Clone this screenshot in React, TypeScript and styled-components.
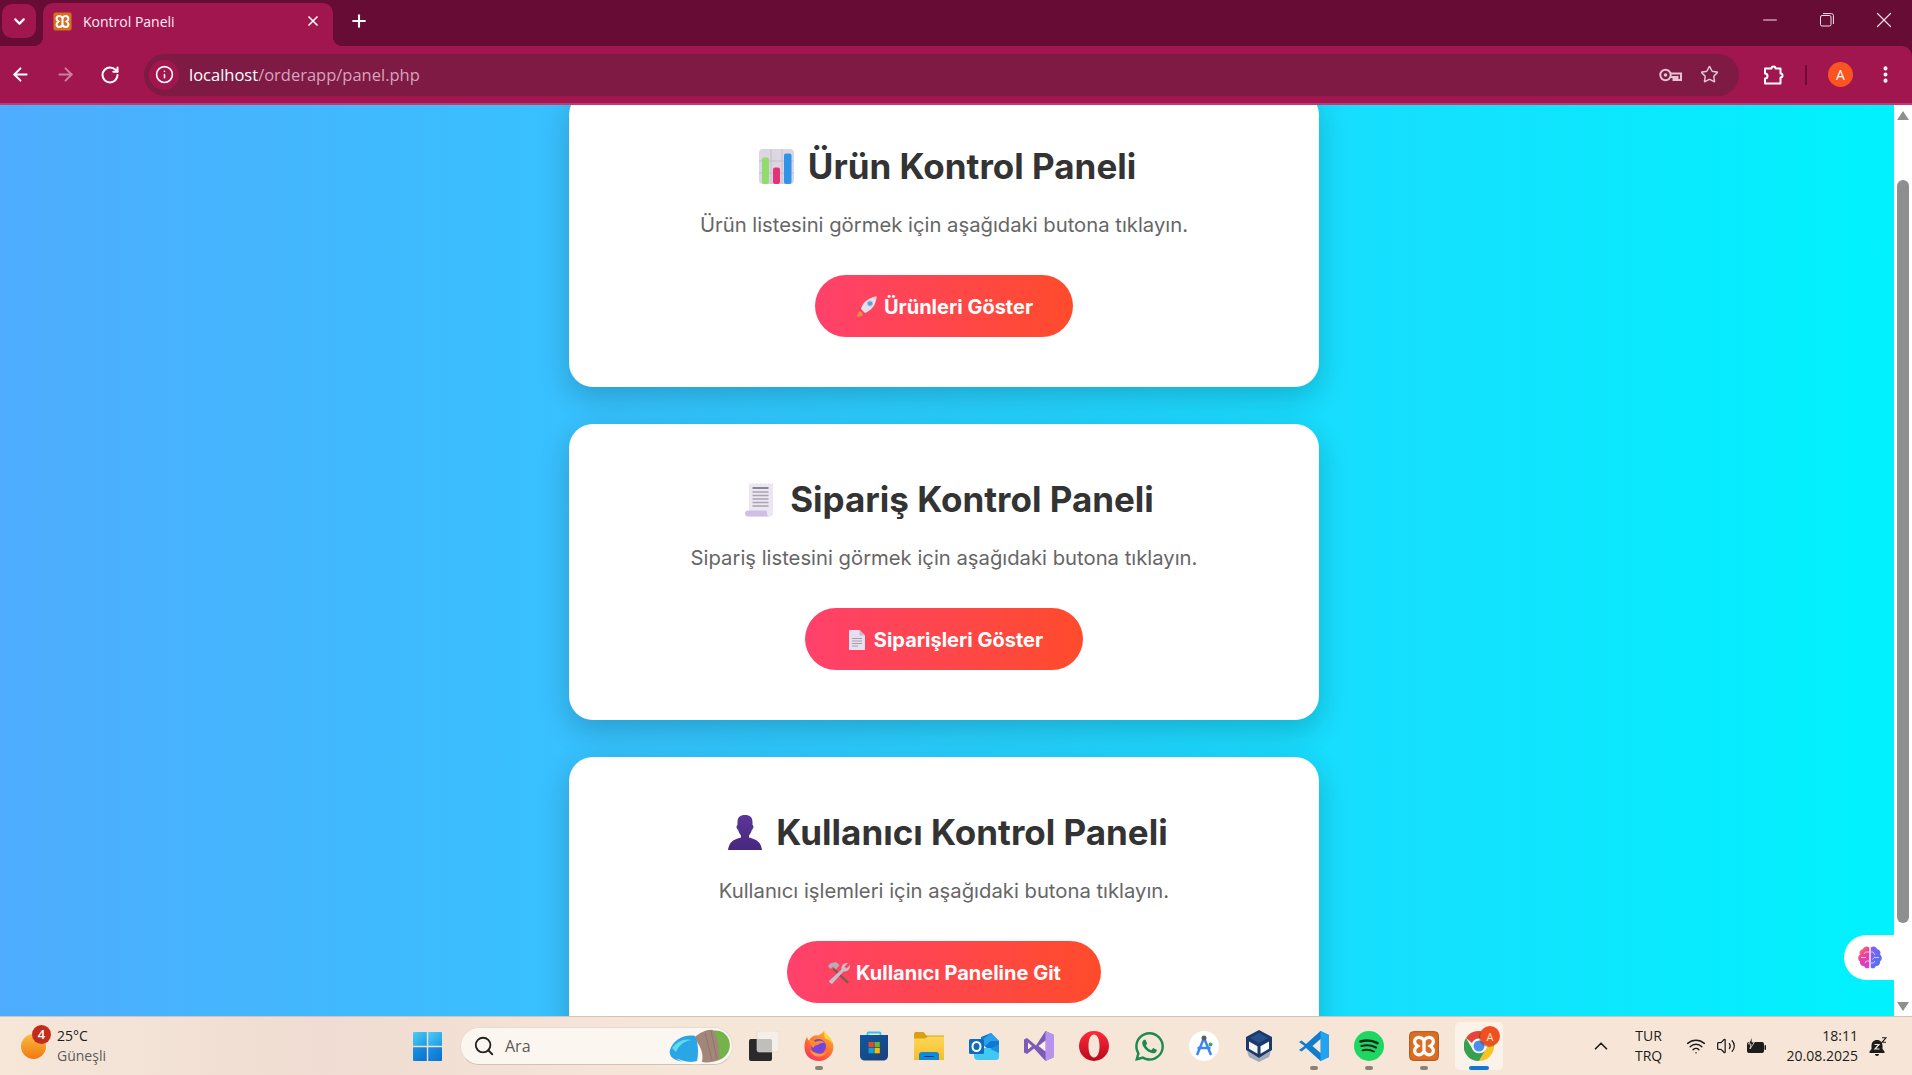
import { ReactNode } from "react"
import styled, { createGlobalStyle } from "styled-components"
import {
  ArrowLeft,
  ArrowRight,
  ChevronDown,
  ChevronUp,
  EllipsisVertical,
  Info,
  Minus,
  Plus,
  RotateCw,
  Search,
  Star,
  Volume2,
  Wifi,
  X,
} from "lucide-react"
import { FaWhatsapp } from "react-icons/fa"

const GlobalStyle = createGlobalStyle`
  html, body {
    margin: 0;
    padding: 0;
    height: 100%;
    overflow: hidden;
  }
  * {
    box-sizing: border-box;
  }
`

/* ---------- small drawings ---------- */

const XamppIcon = ({ size }: { size: number }) => (
  <svg width={size} height={size} viewBox="0 0 24 24">
    <rect x="0.5" y="0.5" width="23" height="23" rx="3" fill="#dd6b20" />
    <rect x="0.5" y="0.5" width="23" height="23" rx="3" fill="none" stroke="#a9541f" strokeWidth="0.8" />
    <path
      d="M8 5C6 5 4.5 6.5 4.5 8.5c0 1.5 1 2.5 2.5 3.5-1.5 1-2.5 2-2.5 3.5C4.5 17.5 6 19 8 19c1.5 0 2.7-.8 4-2.3 1.3 1.5 2.5 2.3 4 2.3 2 0 3.5-1.5 3.5-3.5 0-1.5-1-2.5-2.5-3.5 1.5-1 2.5-2 2.5-3.500C19.5 6.5 18 5 16 5c-1.5 0-2.7.8-4 2.3C10.700 5.800 9.5 5 8 5z"
      fill="none"
      stroke="#fff"
      strokeWidth="2.6"
    />
    <path d="M12 7.500v9" stroke="#fff" strokeWidth="2.6" />
  </svg>
)

const KeyIcon = () => (
  <svg width="23" height="14" viewBox="0 0 23 14" fill="none" stroke="#e0c4d1" strokeWidth="2">
    <circle cx="6.500" cy="7" r="5.200" />
    <circle cx="6.500" cy="7" r="1.800" fill="#e0c4d1" stroke="none" />
    <path d="M11.500 5.500h10.500v6.500h-3.500v-3h-2v3h-2V9h-3" />
  </svg>
)

const RestoreIcon = () => (
  <svg width="14" height="14" viewBox="0 0 14 14" fill="none" stroke="#f6dfe9" strokeWidth="1">
    <rect x="0.5" y="2.5" width="10.5" height="10.5" rx="1.5" />
    <path d="M3 .6h8.500A2 2 0 0 1 13.400 2.500V11" />
  </svg>
)

const ExtensionIcon = () => (
  <svg width="22" height="21" viewBox="0 0 22 21" fill="none" stroke="#fff" strokeWidth="2" strokeLinejoin="round">
    <path d="M2 4.500h6.500a2 2 0 0 1 4 0H17.500v5a2 2 0 0 1 0 4v6H2v-5a2.500 2.500 0 0 0 0-5z" />
  </svg>
)

const BarChartEmoji = () => (
  <svg width="35" height="35" viewBox="0 0 35 35">
    <rect width="35" height="35" rx="4" fill="#dcd6e3" />
    <path d="M12 0v35M23 0v35M0 12h35M0 24h35" stroke="#c4bccd" strokeWidth="1" />
    <rect x="3" y="8.500" width="7" height="26.500" rx="2" fill="#8fdc6a" />
    <rect x="14" y="18.500" width="7" height="16.500" rx="2" fill="#e5307a" />
    <rect x="25" y="4.500" width="7.500" height="30.500" rx="2" fill="#2f93e8" />
  </svg>
)

const ReceiptEmoji = () => (
  <svg width="29" height="35" viewBox="0 0 29 35">
    <path d="M4 1l2 1 2-1 2 1 2-1 2 1 2-1 2 1 2-1 2 1 2-1 2 1 2-1V31a3.500 3.500 0 0 1-3.500 3.500H4z" fill="#ebe6f0" />
    <path d="M0 31.500q0-3 3-3h17.500q1.500 0 1.500 3t3 3H3q-3 0-3-3z" fill="#cdbfe6" />
    <path d="M7.500 6h16" stroke="#8c8596" strokeWidth="2" />
    <path d="M7.500 10h16M7.500 13.500h16M7.500 17h16M7.500 20.500h16M7.500 24h16" stroke="#aaa3b3" strokeWidth="1.300" />
  </svg>
)

const BustEmoji = () => (
  <svg width="34" height="35" viewBox="0 0 34 35">
    <defs>
      <linearGradient id="bustFill" x1="0" y1="0" x2="0" y2="1">
        <stop offset="0" stopColor="#5b369a" />
        <stop offset="1" stopColor="#47277e" />
      </linearGradient>
    </defs>
    <path
      d="M17 0c5 0 7.500 2.500 7.500 7v3c1.300.2 1.300 4-.5 4.500-.8 3-2 5-3 6v2c3 1 7.500 2 10 5 2 2.400 2.500 5 3 7.500H0c.5-2.500 1-5.100 3-7.500 2.500-3 7-4 10-5v-2c-1-1-2.200-3-3-6-1.800-.5-1.800-4.300-.5-4.500V7C9.500 2.500 12 0 17 0z"
      fill="url(#bustFill)"
    />
  </svg>
)

const RocketEmoji = () => (
  <svg width="20" height="22" viewBox="0 0 20 22">
    <path d="M2 15l-2 6 6-1.500-1-3z" fill="#f28b3c" />
    <path d="M5 12l-3 .5-1 2.500 3.500-.5z" fill="#e5417a" />
    <path d="M9 16.500l-.5 3-2.500 1 .5-3.500z" fill="#e5417a" />
    <path d="M4 13C6 6 11 2 19.500.5 19 9 15 14 8 17z" fill="#e6e0ec" />
    <path d="M15 1.400c1.500-.5 3-.8 4.500-.9-.1 1.500-.4 3-.9 4.400z" fill="#d7cfe0" />
    <circle cx="13" cy="7.500" r="2.500" fill="#5a9be6" stroke="#bfb6cc" />
  </svg>
)

const PageEmoji = () => (
  <svg width="16" height="20" viewBox="0 0 16 20">
    <path d="M0 0h10.500L16 5.500V20H0z" fill="#e6dfee" />
    <path d="M10.500 0L16 5.500h-5.500z" fill="#c8bbd9" />
    <path d="M3 8.500h10M3 11h10M3 13.500h10M3 16h6" stroke="#a59db0" strokeWidth="1" />
  </svg>
)

const ToolsEmoji = () => (
  <svg width="23" height="22" viewBox="0 0 23 22">
    <path d="M6 6l15 14-1.800 1.800L4.500 7.500z" fill="#7f5a4c" />
    <path d="M2 1.500L8 0l3.500 3L8 7.500 5 4.800 2.500 7 0 4.500z" fill="#b3adb9" />
    <path d="M3 21.500c-1.500-1-2-2-2-2.500L13.500 7.500C13 4 15.500.5 20 1l-3.500 3.500 2 2L22 3c.5 4-3 7-6.500 6.500L4 22z" fill="#c6c1cc" />
  </svg>
)

const BrainIcon = () => (
  <svg width="24" height="23" viewBox="0 0 24 23">
    <defs>
      <linearGradient id="brainLeft" x1="0" y1="0" x2="0.6" y2="1">
        <stop offset="0" stopColor="#f59a2e" />
        <stop offset="0.5" stopColor="#ec3fa0" />
        <stop offset="1" stopColor="#d23fd0" />
      </linearGradient>
      <linearGradient id="brainRight" x1="0" y1="0" x2="1" y2="1">
        <stop offset="0" stopColor="#8a5cf0" />
        <stop offset="1" stopColor="#4a76f0" />
      </linearGradient>
    </defs>
    <path d="M11.300 1.500C9 -.5 5.500.5 5 3 2 3.500.8 6.500 2 8.500-.5 10.500-.3 14 2 15.500c-.5 3 2 5 4 4.500 1 2.500 3.800 3 5.300 1.500z" fill="url(#brainLeft)" />
    <path d="M12.700 1.500C15 -.5 18.500.5 19 3c3 .5 4.200 3.500 3 5.500 2.500 2 2.300 5.500 0 7 .5 3-2 5-4 4.500-1 2.500-3.800 3-5.300 1.500z" fill="url(#brainRight)" />
    <path d="M11 6H7.500L6 8M3 11.500h5M11 15H8.500L7 17M13 6h2l2 3M21 11.500h-5l-1.500 2M13 17h2.500l1.500-2" stroke="#fff" strokeWidth="0.8" fill="none" opacity="0.8" />
  </svg>
)

const WeatherIcon = () => (
  <svg width="25" height="25" viewBox="0 0 25 25">
    <defs>
      <linearGradient id="sunFill" x1="0" y1="0" x2="0" y2="1">
        <stop offset="0" stopColor="#f8bd40" />
        <stop offset="1" stopColor="#f2780f" />
      </linearGradient>
    </defs>
    <circle cx="12.5" cy="12.5" r="12.5" fill="url(#sunFill)" />
  </svg>
)

const StartIcon = () => (
  <svg width="29" height="29" viewBox="0 0 29 29">
    <defs>
      <linearGradient id="startTop" x1="0" y1="0" x2="1" y2="1">
        <stop offset="0" stopColor="#4ecbf5" />
        <stop offset="1" stopColor="#1c9be6" />
      </linearGradient>
      <linearGradient id="startBottom" x1="0" y1="0" x2="1" y2="1">
        <stop offset="0" stopColor="#1a95e2" />
        <stop offset="1" stopColor="#0a70d0" />
      </linearGradient>
    </defs>
    <path d="M1 0h12.800v13.800H0V1a1 1 0 0 1 1-1z" fill="url(#startTop)" />
    <path d="M15.200 0H28a1 1 0 0 1 1 1v12.800H15.200z" fill="url(#startTop)" />
    <path d="M0 15.200h13.800V29H1a1 1 0 0 1-1-1z" fill="url(#startBottom)" />
    <path d="M15.200 15.200H29V28a1 1 0 0 1-1 1H15.200z" fill="url(#startBottom)" />
  </svg>
)

const SearchArt = () => (
  <svg width="64" height="38" viewBox="0 0 64 38">
    <path d="M36 8c8-7 21-6 25 5 3 9-2 17-10 20-3-6-8-12-15-25z" fill="#74b24a" />
    <path d="M26 11c6-6 14-9 19-8 4 7 7 17 6 30-5 2-12 3-17 2 2-9-2-17-8-24z" fill="#a3867a" />
    <path d="M37 6l7 27M43 4l6 28" stroke="#86716a" strokeWidth="0.8" />
    <path d="M2 23c3-10 14-16 25-14 3 7 4 16 2 25C18 37-1 34 2 23z" fill="#2aa5e6" />
    <path d="M4 21c5-7 13-10 20-8-8 1-13 5-16 12z" fill="#5fdce8" />
    <path d="M8 31c8 4 18 5 26 3l-1 3c-9 1-18 0-25-6z" fill="#fff" opacity="0.8" />
  </svg>
)

const TaskViewIcon = () => (
  <svg width="30" height="30" viewBox="0 0 30 30">
    <rect x="0" y="8" width="23" height="22" rx="2" fill="#2a2a2a" />
    <rect x="8" y="0" width="22" height="21" rx="2" fill="#f4f1ee" fillOpacity="0.75" stroke="#d8d4d0" strokeWidth="0.6" />
  </svg>
)

const FirefoxIcon = () => (
  <svg width="30" height="30" viewBox="0 0 30 30">
    <defs>
      <linearGradient id="foxBody" x1="0.8" y1="0" x2="0.2" y2="1">
        <stop offset="0" stopColor="#ffb22c" />
        <stop offset="0.55" stopColor="#ff6b2e" />
        <stop offset="1" stopColor="#f8306a" />
      </linearGradient>
    </defs>
    <path d="M20 0c1 3 4 4 6 7 3 4 4 8 3 12-1 6-7 11-14 11C7 30 1 25 .5 17 .3 13 1 9 3 6c.5 2 1 3 2 3.500C7 5.500 11 3.500 14 4.500c2-1 4.500-2.500 6-4.500z" fill="url(#foxBody)" />
    <path d="M20 0c1 3 4 4 6 7 1.500 2 2.500 4 3 6-2-3-5-5-8-5.500-1-2.500-1-5-1-7.500z" fill="#ffd83a" />
    <circle cx="14.5" cy="15.5" r="7.5" fill="#7543e0" />
    <path d="M5 9.500c3-1 5 0 6.500 1.500 3-2 7-1.500 9.500 1-3-.5-5 .5-6.500 1.500-1 .5-5 1-5 3.500-2-1-3.500-3-4.500-7.500z" fill="#ff8a2a" />
    <path d="M6 19c1.500 5 6 7 10 6.500 3-.4 6-2.500 7-5.500-2.500 2.500-6 3.500-9.500 2.500-3-.9-5.500-2-7.500-3.500z" fill="#ff9a3a" />
  </svg>
)

const StoreIcon = () => (
  <svg width="30" height="30" viewBox="0 0 30 30">
    <defs>
      <linearGradient id="storeBody" x1="0" y1="0" x2="1" y2="1">
        <stop offset="0" stopColor="#0d5aa0" />
        <stop offset="1" stopColor="#1c3f7a" />
      </linearGradient>
    </defs>
    <path d="M8.500 5V2.500q0-1 1-1h11q1 0 1 1V5" fill="none" stroke="#35c1f1" strokeWidth="1.8" />
    <path d="M1 4h28v21a4.500 4.500 0 0 1-4.500 4.500h-19A4.500 4.500 0 0 1 1 25z" fill="url(#storeBody)" />
    <rect x="9.5" y="11" width="5.3" height="5.3" fill="#e74a25" />
    <rect x="15.5" y="11" width="5.3" height="5.3" fill="#6fb52c" />
    <rect x="9.5" y="17" width="5.3" height="5.3" fill="#07a2e8" />
    <rect x="15.5" y="17" width="5.3" height="5.3" fill="#fdb900" />
  </svg>
)

const FolderIcon = () => (
  <svg width="30" height="28" viewBox="0 0 30 28">
    <defs>
      <linearGradient id="folderBody" x1="0" y1="0" x2="0" y2="1">
        <stop offset="0" stopColor="#ffd75a" />
        <stop offset="1" stopColor="#f8bd27" />
      </linearGradient>
    </defs>
    <path d="M0 2a2 2 0 0 1 2-2h7.500l3 3.500H30V8H0z" fill="#d9a014" />
    <path d="M0 6.500h11l3-2h16V28H0z" fill="url(#folderBody)" />
    <path d="M5 28v-5a3 3 0 0 1 3-3h14a3 3 0 0 1 3 3v5z" fill="#0f8ad8" />
    <path d="M10 24.500h10" stroke="#063f74" strokeWidth="1" />
  </svg>
)

const OutlookIcon = () => (
  <svg width="30" height="27" viewBox="0 0 30 27">
    <path d="M12 4l10-4 8 8v5L20 17 12 10z" fill="#0f78d4" />
    <path d="M22 0l8 8h-8l-6 5-4-5z" fill="#2aa0ea" />
    <path d="M5 15h25v9a3 3 0 0 1-3 3H9a4 4 0 0 1-4-4z" fill="#42c8f5" />
    <path d="M30 11v9l-9-4z" fill="#1a90e0" />
    <rect x="0" y="6" width="15" height="15" rx="1.5" fill="#0f6cbd" />
    <ellipse cx="7.5" cy="13.5" rx="4" ry="4.6" fill="none" stroke="#fff" strokeWidth="2" />
  </svg>
)

const VisualStudioIcon = () => (
  <svg width="30" height="30" viewBox="0 0 30 30">
    <path d="M0 8.500L3 7l9 7.500L21.500 0 30 4v22l-8.500 4L10 17.500 3 23l-3-1.500z" fill="#7b5bb7" />
    <path d="M21.500 0L30 4v22l-8.500 4z" fill="#b792ee" />
    <path d="M21.500 9.500L14.500 15l7 5.500z" fill="#fdf1e6" />
    <path d="M4 11.500v7l4-3.500z" fill="#fdf1e6" />
  </svg>
)

const OperaIcon = () => (
  <svg width="30" height="30" viewBox="0 0 30 30">
    <defs>
      <linearGradient id="operaFill" x1="0" y1="0" x2="0" y2="1">
        <stop offset="0" stopColor="#ff2a3a" />
        <stop offset="1" stopColor="#b8091e" />
      </linearGradient>
    </defs>
    <path
      fillRule="evenodd"
      d="M15 0a15 15 0 1 1 0 30 15 15 0 0 1 0-30zm0 3.500c-3.600 0-5.500 5-5.500 11.500S11.400 26.500 15 26.500s5.500-5 5.500-11.500S18.600 3.500 15 3.500z"
      fill="url(#operaFill)"
    />
  </svg>
)

const StudioIcon = () => (
  <svg width="30" height="30" viewBox="0 0 30 30">
    <circle cx="15" cy="15" r="15" fill="#fff" />
    <path d="M15 7L8 24M15 7l7 17" stroke="#3f84f0" strokeWidth="2.5" fill="none" />
    <path d="M8.500 17h13" stroke="#3f84f0" strokeWidth="2.5" />
    <circle cx="15" cy="7" r="2.5" fill="#5a5f6a" />
    <circle cx="21.5" cy="13.5" r="2" fill="#3dab5c" />
  </svg>
)

const VirtualBoxIcon = () => (
  <svg width="30" height="32" viewBox="0 0 30 32">
    <path d="M3 21l12 7 12-7-2 6-10 5-10-5z" fill="#8c9ab5" opacity="0.8" />
    <path d="M15 0l13 7v13l-13 8-13-8V7z" fill="#1b3a6b" />
    <path d="M15 3l9 5-9 5-9-5z" fill="#24508c" />
    <path d="M5 11.500l8.500 4.800v7.500L5 18.800z" fill="#f3f5f9" />
    <path d="M25 11.500l-8.500 4.800v7.500l8.500-5z" fill="#f9fafc" />
  </svg>
)

const VsCodeIcon = () => (
  <svg width="30" height="30" viewBox="0 0 30 30">
    <path d="M21.500 0L30 4v22l-8.500 4L7 17l-4.500 3.500L0 19l5.500-4L0 11l2.500-1.500L7 13z" fill="#0f7ccc" />
    <path d="M21.500 0L30 4v22l-8.500 4z" fill="#23a3ef" />
    <path d="M21.500 8l-8 7 8 7z" fill="#f8e8da" />
  </svg>
)

const SpotifyIcon = () => (
  <svg width="30" height="30" viewBox="0 0 30 30">
    <circle cx="15" cy="15" r="15" fill="#1ed760" />
    <g fill="none" stroke="#16281c" strokeLinecap="round">
      <path d="M6.500 10.500c5.500-1.500 12-1 17 1.700" strokeWidth="2.6" />
      <path d="M7.500 15c4.500-1.200 10-.8 14.500 1.500" strokeWidth="2.2" />
      <path d="M8.500 19.300c4-1 8-.6 11.500 1.200" strokeWidth="1.8" />
    </g>
  </svg>
)

const ChromeIcon = () => (
  <svg width="30" height="30" viewBox="0 0 30 30">
    <path d="M15 0a15 15 0 0 1 13 7.500H15a7.500 7.500 0 0 0-7 4.500L2 7A15 15 0 0 1 15 0z" fill="#e2463a" />
    <path d="M28 7.500A15 15 0 0 1 15 30l6.500-11.200A7.500 7.500 0 0 0 21 7.500z" fill="#f9c221" />
    <path d="M2 7l6.500 11.300a7.500 7.500 0 0 0 13 .5L15 30A15 15 0 0 1 2 7z" fill="#37a04f" />
    <circle cx="15" cy="15" r="7" fill="#fff" />
    <circle cx="15" cy="15" r="5.5" fill="#4a8ff0" />
  </svg>
)

const BatteryIcon = () => (
  <svg width="20" height="18" viewBox="0 0 20 18">
    <path d="M1 7a2 2 0 0 1 2-2h13a2 2 0 0 1 2 2v7a2 2 0 0 1-2 2H3a2 2 0 0 1-2-2z" fill="#1c1c1c" />
    <rect x="18.5" y="8" width="1.5" height="5" rx="0.7" fill="#1c1c1c" />
    <path d="M6 0L2.500 7H5l-1 5 4.500-7H6z" fill="#1c1c1c" stroke="#f6e6d9" strokeWidth="0.8" />
  </svg>
)

const BellIcon = () => (
  <svg width="18" height="19" viewBox="0 0 18 19">
    <path d="M8 3C4.500 3 2.500 5.500 2.500 9v3L.5 14.500V16h15v-1.500l-2-2.500V9C13.500 5.500 11.500 3 8 3z" fill="#1c1c1c" />
    <path d="M6 17h4a2 2 0 0 1-4 0z" fill="#1c1c1c" />
    <path d="M5.500 7.500h4.500l-4 4.500h4.500" stroke="#f6e6d9" strokeWidth="1.2" fill="none" />
    <path d="M13 .8h4l-4 4.500h4" stroke="#1c1c1c" strokeWidth="1.1" fill="none" />
  </svg>
)

/* ---------- data ---------- */

interface PanelData {
  title: string
  text: string
  action: string
  icon: ReactNode
  actionIcon: ReactNode
}

const panels: PanelData[] = [
  {
    title: "Ürün Kontrol Paneli",
    text: "Ürün listesini görmek için aşağıdaki butona tıklayın.",
    action: "Ürünleri Göster",
    icon: <BarChartEmoji />,
    actionIcon: <RocketEmoji />,
  },
  {
    title: "Sipariş Kontrol Paneli",
    text: "Sipariş listesini görmek için aşağıdaki butona tıklayın.",
    action: "Siparişleri Göster",
    icon: <ReceiptEmoji />,
    actionIcon: <PageEmoji />,
  },
  {
    title: "Kullanıcı Kontrol Paneli",
    text: "Kullanıcı işlemleri için aşağıdaki butona tıklayın.",
    action: "Kullanıcı Paneline Git",
    icon: <BustEmoji />,
    actionIcon: <ToolsEmoji />,
  },
]

const apps: { key: string; icon: ReactNode; running?: boolean }[] = [
  { key: "taskview", icon: <TaskViewIcon /> },
  { key: "firefox", icon: <FirefoxIcon />, running: true },
  { key: "store", icon: <StoreIcon /> },
  { key: "folder", icon: <FolderIcon /> },
  { key: "outlook", icon: <OutlookIcon /> },
  { key: "vs", icon: <VisualStudioIcon /> },
  { key: "opera", icon: <OperaIcon /> },
  { key: "whatsapp", icon: <FaWhatsapp size={33} color="#1b8a50" /> },
  { key: "studio", icon: <StudioIcon /> },
  { key: "vbox", icon: <VirtualBoxIcon /> },
  { key: "vscode", icon: <VsCodeIcon />, running: true },
  { key: "spotify", icon: <SpotifyIcon />, running: true },
  { key: "xampp", icon: <XamppIcon size={30} />, running: true },
]

const App = () => {
  return (
    <Screen>
      <GlobalStyle />
      <TabStrip>
        <TabListButton>
          <ChevronDown size={17} strokeWidth={3} />
        </TabListButton>
        <Tab>
          <XamppIcon size={19} />
          <TabTitle>Kontrol Paneli</TabTitle>
          <X size={16} strokeWidth={2.5} />
        </Tab>
        <NewTabButton>
          <Plus size={20} strokeWidth={2.5} />
        </NewTabButton>
        <WindowControls>
          <WindowButton>
            <Minus size={22} strokeWidth={1.2} />
          </WindowButton>
          <WindowButton>
            <RestoreIcon />
          </WindowButton>
          <WindowButton>
            <X size={26} strokeWidth={1.1} />
          </WindowButton>
        </WindowControls>
      </TabStrip>

      <Toolbar>
        <NavButton>
          <ArrowLeft size={21} strokeWidth={2.2} />
        </NavButton>
        <NavButton $muted>
          <ArrowRight size={21} strokeWidth={2.2} />
        </NavButton>
        <NavButton>
          <RotateCw size={20} strokeWidth={2.4} />
        </NavButton>
        <Omnibox>
          <SiteChip>
            <Info size={19} strokeWidth={2} />
          </SiteChip>
          <Url>
            <UrlHost>localhost</UrlHost>/orderapp/panel.php
          </Url>
          <OmniActions>
            <KeyIcon />
            <Star size={19} strokeWidth={1.8} color="#e2c8d4" />
          </OmniActions>
        </Omnibox>
        <ExtensionButton>
          <ExtensionIcon />
        </ExtensionButton>
        <ToolbarDivider />
        <Avatar>A</Avatar>
        <MenuButton>
          <EllipsisVertical size={21} strokeWidth={2.6} />
        </MenuButton>
      </Toolbar>

      <Viewport>
        <Page>
          {panels.map((panel) => (
            <Card key={panel.title}>
              <CardTitle>
                <TitleIcon>{panel.icon}</TitleIcon>
                {panel.title}
              </CardTitle>
              <CardText>{panel.text}</CardText>
              <ActionButton>
                <ActionIcon>{panel.actionIcon}</ActionIcon>
                {panel.action}
              </ActionButton>
            </Card>
          ))}
        </Page>
        <ScrollTrack>
          <ScrollArrow $dir="up" />
          <ScrollThumb />
          <ScrollArrow $dir="down" />
        </ScrollTrack>
        <AssistantTab>
          <BrainIcon />
        </AssistantTab>
      </Viewport>

      <Taskbar>
        <Weather>
          <WeatherSun>
            <WeatherIcon />
            <WeatherBadge>4</WeatherBadge>
          </WeatherSun>
          <WeatherText>
            <span>25°C</span>
            <WeatherState>Güneşli</WeatherState>
          </WeatherText>
        </Weather>
        <StartButton>
          <StartIcon />
        </StartButton>
        <SearchBox>
          <Search size={22} strokeWidth={2} color="#222" />
          <SearchLabel>Ara</SearchLabel>
          <SearchArt />
        </SearchBox>
        <AppRow>
          {apps.map((app) => (
            <AppSlot key={app.key} $running={app.running}>
              {app.icon}
            </AppSlot>
          ))}
          <AppSlot $active>
            <ChromeTile>
              <ChromeIcon />
              <ChromeBadge>A</ChromeBadge>
            </ChromeTile>
          </AppSlot>
        </AppRow>
        <Tray>
          <TrayChevron>
            <ChevronUp size={22} strokeWidth={1.8} />
          </TrayChevron>
          <Language>
            <span>TUR</span>
            <span>TRQ</span>
          </Language>
          <TrayIcons>
            <Wifi size={20} strokeWidth={1.8} />
            <Volume2 size={20} strokeWidth={1.5} />
            <BatteryIcon />
          </TrayIcons>
          <Clock>
            <span>18:11</span>
            <span>20.08.2025</span>
          </Clock>
          <BellIcon />
        </Tray>
      </Taskbar>
    </Screen>
  )
}

export default App

const Screen = styled.div`
  width: 100vw;
  height: 100vh;
  display: flex;
  flex-direction: column;
  overflow: hidden;
  font-family: "Open Sans", "Noto Sans", sans-serif;
  background: #660c35;
`

const TabStrip = styled.div`
  flex: 0 0 46px;
  display: flex;
  align-items: flex-start;
  padding-left: 2px;
  background: #660c35;
  color: #fff;
`

const TabListButton = styled.div`
  width: 34px;
  height: 34px;
  margin-top: 4px;
  display: flex;
  align-items: center;
  justify-content: center;
  border-radius: 10px;
  background: #a21650;
`

const Tab = styled.div`
  position: relative;
  width: 290px;
  height: 43px;
  margin: 3px 0 0 7px;
  padding: 0 12px 7px 10px;
  display: flex;
  align-items: center;
  border-radius: 10px 10px 0 0;
  background: #a21650;

  &::before,
  &::after {
    content: "";
    position: absolute;
    bottom: 0;
    width: 10px;
    height: 10px;
  }
  &::before {
    left: -10px;
    background: radial-gradient(circle at 0 0, transparent 10px, #a21650 10.5px);
  }
  &::after {
    right: -10px;
    background: radial-gradient(circle at 100% 0, transparent 10px, #a21650 10.5px);
  }
`

const TabTitle = styled.span`
  flex: 1;
  margin-left: 11px;
  font-size: 14px;
  color: #fbeef4;
`

const NewTabButton = styled.div`
  width: 36px;
  height: 34px;
  margin: 4px 0 0 8px;
  display: flex;
  align-items: center;
  justify-content: center;
`

const WindowControls = styled.div`
  margin-left: auto;
  display: flex;
`

const WindowButton = styled.div`
  width: 57px;
  height: 40px;
  display: flex;
  align-items: center;
  justify-content: center;
  color: #f6dfe9;
`

const Toolbar = styled.div`
  flex: 0 0 59px;
  display: flex;
  align-items: center;
  padding: 0 15px 0 0;
  background: #a21650;
  border-bottom: 2px solid #c13a78;
  border-top-right-radius: 10px;
  color: #fff;
`

const NavButton = styled.div<{ $muted?: boolean }>`
  width: 40px;
  margin-right: 5px;
  display: flex;
  justify-content: center;
  opacity: ${(p) => (p.$muted ? 0.45 : 1)};
`

const Omnibox = styled.div`
  flex: 1;
  height: 42px;
  margin-left: 9px;
  padding: 0 20px 0 5px;
  display: flex;
  align-items: center;
  border-radius: 21px;
  background: #7f1a44;
`

const SiteChip = styled.div`
  width: 30px;
  height: 30px;
  display: flex;
  align-items: center;
  justify-content: center;
  border-radius: 50%;
  background: #a21650;
`

const Url = styled.div`
  flex: 1;
  margin-left: 10px;
  font-size: 16.5px;
  color: #d6a4bb;
`

const UrlHost = styled.span`
  color: #fff;
`

const OmniActions = styled.div`
  display: flex;
  align-items: center;
  gap: 18px;
`

const ExtensionButton = styled.div`
  width: 40px;
  margin-left: 15px;
  display: flex;
  justify-content: center;
`

const ToolbarDivider = styled.div`
  width: 2px;
  height: 20px;
  margin-left: 11px;
  background: #6e0d38;
`

const Avatar = styled.div`
  width: 25px;
  height: 25px;
  margin-left: 21px;
  display: flex;
  align-items: center;
  justify-content: center;
  border-radius: 50%;
  background: #fb5420;
  font-size: 14px;
  color: #fff;
`

const MenuButton = styled.div`
  width: 24px;
  margin-left: 20px;
  display: flex;
  justify-content: center;
`

const Viewport = styled.div`
  position: relative;
  flex: 1;
  min-height: 0;
  display: flex;
`

const Page = styled.main`
  flex: 1;
  min-width: 0;
  overflow: hidden;
  display: flex;
  flex-direction: column;
  align-items: center;
  gap: 37px;
  padding-right: 6px;
  background: linear-gradient(to right, #4facfe, #00f2fe);
  font-family: Inter, "Liberation Sans", sans-serif;

  & > :first-child {
    margin-top: -14px;
  }
`

const Card = styled.section`
  flex: 0 0 296px;
  width: 750px;
  padding-top: 50px;
  display: flex;
  flex-direction: column;
  align-items: center;
  border-radius: 24px;
  background: #fff;
  box-shadow: 0 10px 30px rgba(0, 0, 0, 0.2);
`

const CardTitle = styled.h2`
  margin: 0;
  display: flex;
  align-items: center;
  height: 50px;
  font-size: 35px;
  font-weight: 700;
  color: #333;
`

const TitleIcon = styled.span`
  width: 50px;
  margin-right: 6px;
  display: flex;
  justify-content: center;
`

const CardText = styled.p`
  margin: 18px 0 0;
  font-size: 20.25px;
  line-height: 32px;
  color: #666;
`

const ActionButton = styled.button`
  height: 62px;
  margin-top: 34px;
  padding: 2px 40px 0;
  display: flex;
  align-items: center;
  border: none;
  border-radius: 31px;
  background: linear-gradient(to right, #ff416c, #ff4b2b);
  font-family: inherit;
  font-size: 20px;
  font-weight: 700;
  color: #fff;
`

const ActionIcon = styled.span`
  width: 29px;
  padding-right: 5px;
  display: flex;
  justify-content: center;
`

const ScrollTrack = styled.div`
  flex: 0 0 18px;
  display: flex;
  flex-direction: column;
  align-items: center;
  background: #fff;
`

const ScrollArrow = styled.div<{ $dir: "up" | "down" }>`
  width: 0;
  height: 0;
  margin: 6px 0 5px;
  border-left: 6.5px solid transparent;
  border-right: 6.5px solid transparent;
  ${(p) =>
    p.$dir === "up"
      ? "border-bottom: 9px solid #8f8f8f;"
      : "border-top: 9px solid #8f8f8f;"}
`

const ScrollThumb = styled.div`
  width: 12px;
  height: 743px;
  margin: 55px 0 auto;
  border-radius: 6px;
  background: #8f8f8f;
`

const AssistantTab = styled.div`
  position: absolute;
  top: 830px;
  right: 18px;
  width: 50px;
  height: 45px;
  padding-left: 14px;
  display: flex;
  align-items: center;
  border-radius: 23px 0 0 23px;
  background: #fff;
`

const Taskbar = styled.footer`
  flex: 0 0 59px;
  display: flex;
  align-items: center;
  border-top: 1px solid #cfc5bb;
  background: linear-gradient(to right, #f6e7d9, #f0dcd2 17%, #f6e6d8 35%, #f7e6d8);
  color: #1c1c1c;
`

const Weather = styled.div`
  width: 413px;
  padding-left: 21px;
  display: flex;
  align-items: center;
  font-size: 14px;
`

const WeatherSun = styled.div`
  position: relative;
  width: 25px;
  height: 25px;
  margin-right: 11px;
`

const WeatherBadge = styled.span`
  position: absolute;
  top: -9px;
  left: 11px;
  width: 19px;
  height: 19px;
  display: flex;
  align-items: center;
  justify-content: center;
  border-radius: 50%;
  background: #c42b1c;
  font-size: 13px;
  font-weight: 600;
  color: #fff;
`

const WeatherText = styled.div`
  display: flex;
  flex-direction: column;
  line-height: 20px;
`

const WeatherState = styled.span`
  color: #5c5c5c;
`

const StartButton = styled.div`
  width: 29px;
  height: 29px;
  margin-right: 18px;
`

const SearchBox = styled.div`
  width: 273px;
  height: 38px;
  padding-left: 12px;
  display: flex;
  align-items: center;
  border: 1px solid #e6dbd0;
  border-bottom-color: #cfc3b6;
  border-radius: 19px;
  background: #fcf6f0;
`

const SearchLabel = styled.span`
  flex: 1;
  margin-left: 10px;
  font-size: 16px;
  color: #5c5c5c;
`

const AppRow = styled.div`
  height: 100%;
  margin-left: 3.5px;
  display: flex;
`

const AppSlot = styled.div<{ $running?: boolean; $active?: boolean }>`
  position: relative;
  width: 55px;
  display: flex;
  align-items: center;
  justify-content: center;

  ${(p) =>
    (p.$running || p.$active) &&
    `&::after {
      content: "";
      position: absolute;
      bottom: 5px;
      left: 50%;
      transform: translateX(-50%);
      width: ${p.$active ? 20 : 8}px;
      height: 4px;
      border-radius: 2px;
      background: ${p.$active ? "#0f78d4" : "#8a8278"};
    }`}
`

const ChromeTile = styled.div`
  position: relative;
  width: 48px;
  height: 48px;
  display: flex;
  align-items: center;
  justify-content: center;
  border-radius: 5px;
  background: #fbf2ea;
`

const ChromeBadge = styled.span`
  position: absolute;
  top: 4px;
  right: 3px;
  width: 20px;
  height: 20px;
  display: flex;
  align-items: center;
  justify-content: center;
  border-radius: 50%;
  background: #f0501e;
  box-shadow: -1px 1px 1px rgba(90, 40, 20, 0.5);
  font-size: 11px;
  color: #ffe5da;
`

const Tray = styled.div`
  margin-left: auto;
  padding-right: 25px;
  display: flex;
  align-items: center;
`

const TrayChevron = styled.div`
  display: flex;
  margin-right: 19px;
`

const Language = styled.div`
  display: flex;
  flex-direction: column;
  align-items: center;
  width: 36px;
  margin-right: 19px;
  font-size: 14px;
  line-height: 20px;
`

const TrayIcons = styled.div`
  display: flex;
  align-items: center;
  gap: 10px;
  margin-right: 21px;
`

const Clock = styled.div`
  display: flex;
  flex-direction: column;
  align-items: flex-end;
  margin-right: 11px;
  font-size: 14px;
  line-height: 20px;
`
